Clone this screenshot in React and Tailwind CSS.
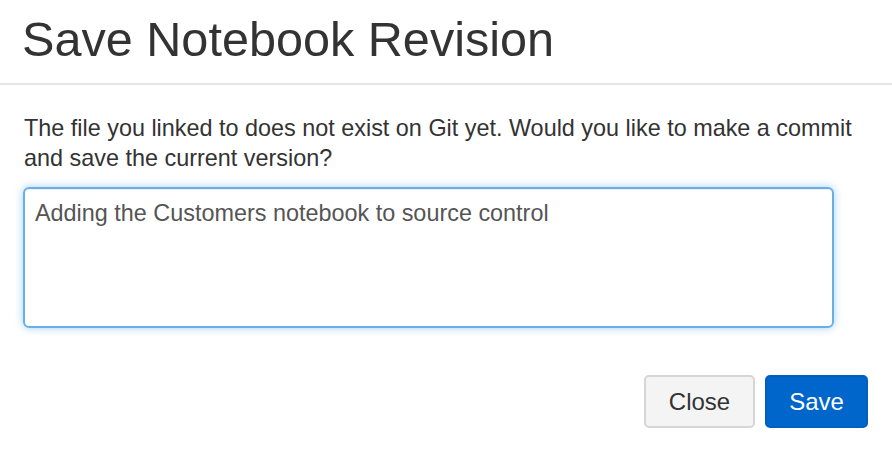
import React from 'react'

export default function App() {
  return (
    <div
      className="w-[892px] h-[453px] bg-white text-[#333] overflow-hidden"
      style={{ fontFamily: '"Liberation Sans", Arial, sans-serif' }}
    >
      <header className="h-[85px] border-b-2 border-[#e5e5e5] pl-[22px] pt-[15px]">
        <h1 className="text-[48.6px] leading-[48px] font-normal">Save Notebook Revision</h1>
      </header>

      <div className="pl-[24px] pr-[24px] pt-[28px]">
        <p className="text-[23.4px] leading-[30px]">
          The file you linked to does not exist on Git yet. Would you like to make a commit and save the current version?
        </p>
        <textarea
          className="mt-[14px] ml-[-1px] block w-[811px] h-[141px] resize-none rounded-[6px] border-2 border-[#66afe9] px-[10px] pt-[9px] text-[23.4px] leading-[30px] text-[#555] outline-none shadow-[inset_0_1px_1px_rgba(0,0,0,0.075),0_0_8px_rgba(102,175,233,0.6)]"
          defaultValue="Adding the Customers notebook to source control"
        />
      </div>

      <div className="flex justify-end gap-[10px] pr-[24px] mt-[47px]">
        <button className="w-[111px] h-[53px] rounded-[5px] border-2 border-[#d6d6d6] bg-[#f4f4f4] text-[24px] text-[#333]">
          Close
        </button>
        <button className="w-[103px] h-[53px] rounded-[5px] border-2 border-[#005fbf] bg-[#0066cc] text-[24px] text-white">
          Save
        </button>
      </div>
    </div>
  )
}
